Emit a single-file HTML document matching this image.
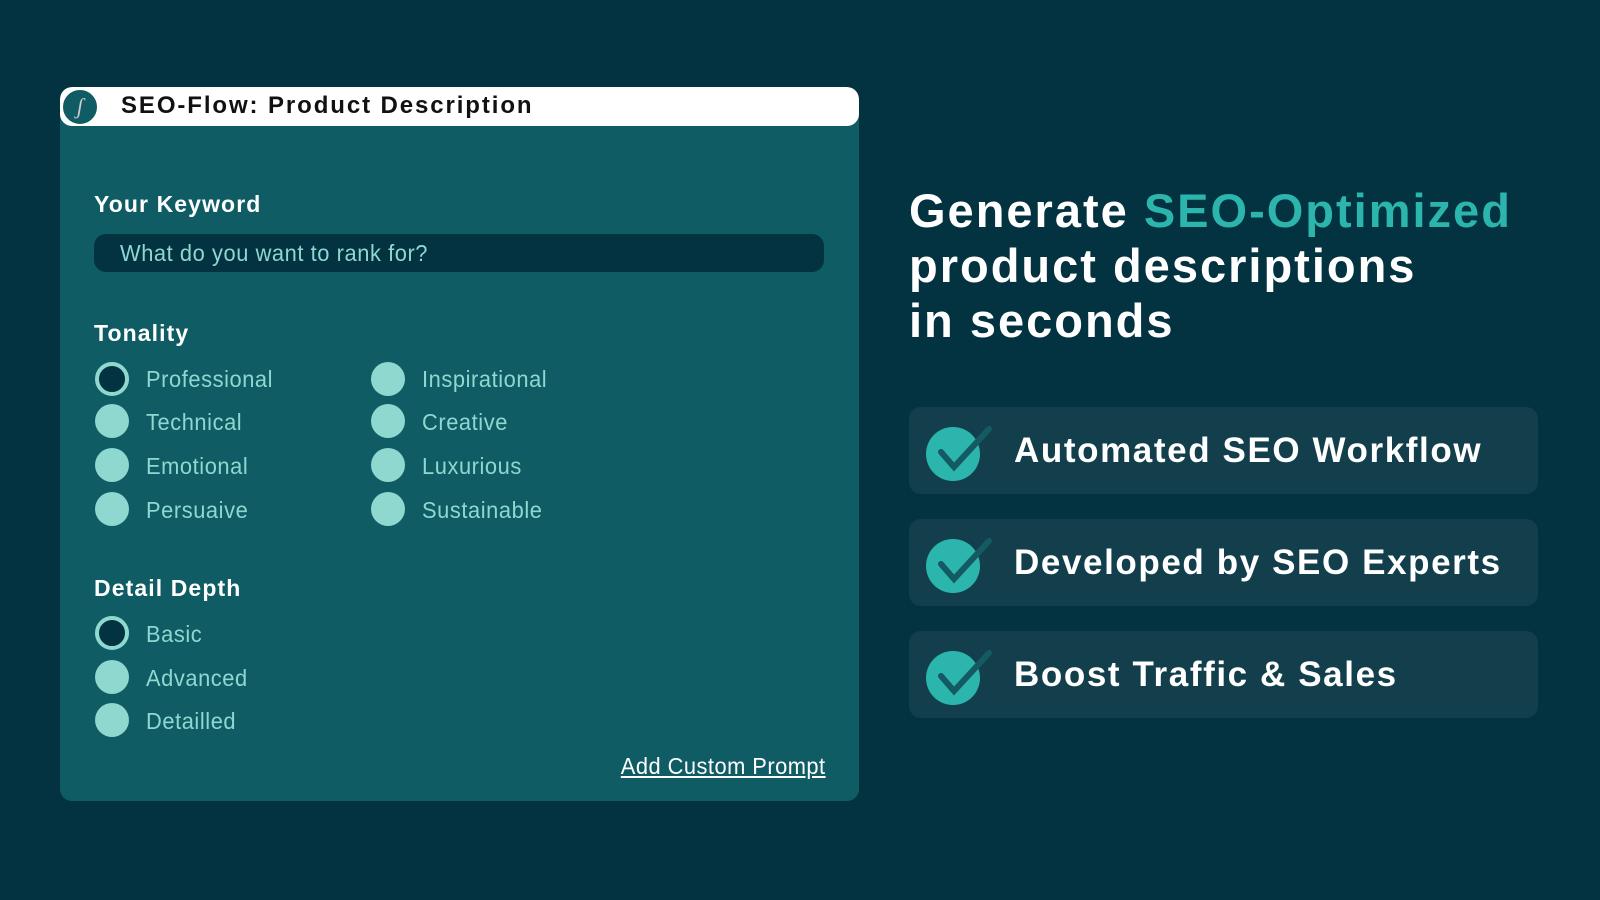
<!DOCTYPE html>
<html><head><style>
*{margin:0;padding:0;box-sizing:border-box}
body{width:1600px;height:900px;background:#033241;position:relative;overflow:hidden;font-family:"Liberation Sans",sans-serif}
.panel{position:absolute;left:60px;top:87px;width:799px;height:714px;background:#0f5c65;border-radius:12px;overflow:hidden}
.hdr{position:absolute;left:0;top:0;width:799px;height:39px;background:#fff;border-radius:12px 12px 12px 12px}
.logo{position:absolute;left:1px;top:1px;width:38px;height:38px;border-radius:50%;background:#0f5c65;border:2px solid #fff;color:#ccc;font:italic 22px "Liberation Serif",serif;text-align:center;line-height:34px}
.ttl{position:absolute;left:61px;top:5px;font-weight:bold;font-size:24px;letter-spacing:1.9px;color:#111}
.lbl{position:absolute;left:34px;color:#fff;font-weight:bold;font-size:23px;letter-spacing:1.1px}
.inp{position:absolute;left:34px;top:147px;width:730px;height:38px;background:#033241;border-radius:12px}
.ph{position:absolute;color:#8fd8d0;font-size:23px;letter-spacing:.6px;transform:scaleX(.95);transform-origin:left center;white-space:nowrap}
.r{position:absolute;width:34px;height:34px;border-radius:50%;background:#8fd8d0}
.r.sel{background:#033241;border:4px solid #8fd8d0}
.link{position:absolute;right:33px;top:666px;color:#fff;font-size:23px;letter-spacing:.5px;text-decoration:underline;transform:scaleX(.95);transform-origin:right center}
.h{position:absolute;left:909px;color:#fff;font-weight:bold;font-size:47px;letter-spacing:2px;line-height:55px;top:183px}
.h span{color:#2bb5ad}
.card{position:absolute;left:909px;width:629px;height:87px;background:#133f4d;border-radius:12px}
.card .c{position:absolute;left:17px;top:20px;width:54px;height:54px;border-radius:50%;background:#2bb5ad}
.card svg{position:absolute;left:20px;top:10px}
.card .t{position:absolute;left:105px;top:24px;color:#fff;font-weight:bold;font-size:35px;letter-spacing:1.6px}
</style></head><body>
<div class="panel">
<div class="hdr"><div class="logo">ʃ</div><div class="ttl">SEO-Flow: Product Description</div></div>
<div class="lbl" style="top:104px">Your Keyword</div>
<div class="inp"><div class="ph" style="left:26px;top:6px">What do you want to rank for?</div></div>
<div class="lbl" style="top:233px">Tonality</div>
<div class="r sel" style="left:35px;top:275px"></div><div class="ph" style="left:86px;top:279px">Professional</div>
<div class="r" style="left:35px;top:317px"></div><div class="ph" style="left:86px;top:322px">Technical</div>
<div class="r" style="left:35px;top:361px"></div><div class="ph" style="left:86px;top:366px">Emotional</div>
<div class="r" style="left:35px;top:405px"></div><div class="ph" style="left:86px;top:410px">Persuaive</div>
<div class="r" style="left:311px;top:275px"></div><div class="ph" style="left:362px;top:279px">Inspirational</div>
<div class="r" style="left:311px;top:317px"></div><div class="ph" style="left:362px;top:322px">Creative</div>
<div class="r" style="left:311px;top:361px"></div><div class="ph" style="left:362px;top:366px">Luxurious</div>
<div class="r" style="left:311px;top:405px"></div><div class="ph" style="left:362px;top:410px">Sustainable</div>
<div class="lbl" style="top:488px">Detail Depth</div>
<div class="r sel" style="left:35px;top:529px"></div><div class="ph" style="left:86px;top:534px">Basic</div>
<div class="r" style="left:35px;top:573px"></div><div class="ph" style="left:86px;top:578px">Advanced</div>
<div class="r" style="left:35px;top:616px"></div><div class="ph" style="left:86px;top:621px">Detailled</div>
<div class="link">Add Custom Prompt</div>
</div>
<div class="h">Generate <span>SEO-Optimized</span><br>product descriptions<br>in seconds</div>
<div class="card" style="top:407px"><div class="c"></div><svg width="70" height="60"><path d="M12 35 L25 50 L60 12" fill="none" stroke="#135a63" stroke-width="6" stroke-linecap="round"/></svg><div class="t">Automated SEO Workflow</div></div>
<div class="card" style="top:519px"><div class="c"></div><svg width="70" height="60"><path d="M12 35 L25 50 L60 12" fill="none" stroke="#135a63" stroke-width="6" stroke-linecap="round"/></svg><div class="t">Developed by SEO Experts</div></div>
<div class="card" style="top:631px"><div class="c"></div><svg width="70" height="60"><path d="M12 35 L25 50 L60 12" fill="none" stroke="#135a63" stroke-width="6" stroke-linecap="round"/></svg><div class="t">Boost Traffic &amp; Sales</div></div>
</body></html>
